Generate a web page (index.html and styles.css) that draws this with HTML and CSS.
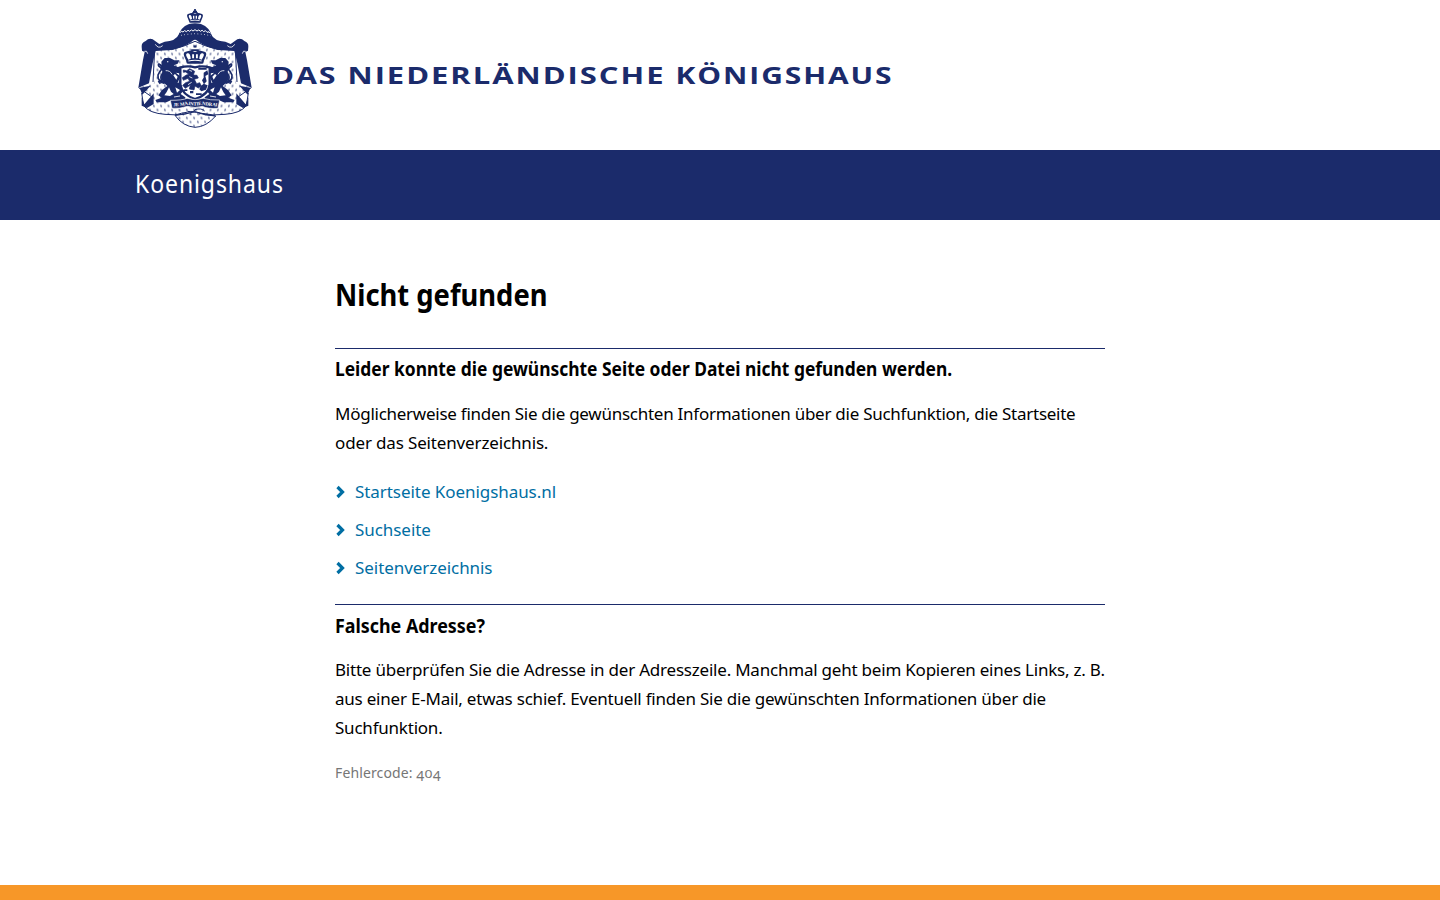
FILE: index.html
```html
<!DOCTYPE html>
<html lang="de">
<head>
<meta charset="utf-8">
<title>Nicht gefunden | Das Niederländische Königshaus</title>
<link rel="stylesheet" href="styles.css">
</head>
<body>
<header class="masthead">
  <svg class="crest" viewBox="0 0 390 405" role="img" aria-label="Wappen">
    <defs>
      <pattern id="ermine" width="22" height="24" patternUnits="userSpaceOnUse">
        <path d="M5 2l1 8M16 14l1 8" stroke="#1b2b6b" stroke-width="2.6"/>
      </pattern>
      <g id="crown">
        <path class="ink" d="M-3-19h6v-4h-6zM-8-15h16v4H-8zM-16 17L-23 0Q-26-9-18-10Q-10-14 0-9Q10-14 18-10Q26-9 23 0L16 17Z"/>
        <path class="paper" d="M-17 3Q-21-5-16-6Q-10-7-9 6L-14 8ZM17 3Q21-5 16-6Q10-7 9 6L14 8ZM-6-4h4v9h-4zM2-4h4v9h-4z"/>
        <path class="paperline" d="M-14 11Q0 8 14 11"/>
      </g>
      <g id="side">
        <path class="ink" d="M35 140Q34 128 47 123Q57 113 68 118L88 132L104 125Q137 124 147 103L195 103V118Q163 143 124 150L77 153L68 190L57 250L25 263L39 180L44 156L36 152Z"/>
        <path class="paperline" d="M76 133Q85 148 98 137M43 154Q51 150 53 161"/>
        <path class="mantle" d="M75 151Q125 151 195 118V345Q130 349 80 339Q43 337 39 315L70 294L26 262L73 250Z"/>
        <path class="line" d="M124 149Q163 140 195 124"/>
        <path class="ink" d="M29 263L62 257L37 284ZM43 313L71 280V312L51 324L35 317V292Z"/>
        <path class="line" d="M74 150L69 246M26 263L70 294M35 279L41 317Q59 340 105 343Q140 348 175 340"/>
        <path class="ink" d="M95 199L94 185L104 174L120 174L133 181L148 181L143 191L131 196L143 201L158 198L158 221L137 218L150 228L158 246L150 256L160 272L152 282L166 292V302H119L109 307H80L76 300L95 293L85 286L96 270L112 258L103 250L93 235L98 213L90 205Z"/>
        <path class="lineheavy" d="M104 250Q82 244 84 225Q87 216 97 205Q80 198 87 192Q97 196 98 207Q103 219 94 226Q88 239 104 248M91 251L85 243"/>
        <path class="paper" d="M117 262L110 276L103 286L120 288L131 282L123 275ZM135 222L143 230L139 239L130 226ZM111 184h4v3h-4zM136 262l14 8-9 8z"/>
        <path class="paperline" d="M107 212Q120 211 126 223M132 291l18-3M150 235l-6 14"/>
      </g>
    </defs>
    <path class="mantle outline" d="M135 346Q160 345 195 335Q230 345 257 348Q229 381 195 382Q158 379 135 346Z"/>
    <use href="#side"/>
    <use href="#side" transform="translate(390 0) scale(-1 1)"/>
    <path class="ink" d="M143 116Q148 82 177 72Q195 67 213 72Q242 82 248 116L220 111L195 119L170 111Z"/>
    <path class="scallop" d="M149 99q5-9 10-3q5-8 10-1q5-8 10-1q5-8 10-1q6-8 12 0q6-7 10 1q6-7 10 1q6-7 10 2q7-5 10 3"/>
    <path class="dots" d="M153 106L170 103L195 101L220 103L243 107"/>
    <use href="#crown" transform="translate(195 51)"/>
    <path class="ink" d="M193 28h4v4h4v4h-12v-4h4z"/>
    <path class="shield" d="M151 203Q172 196 195 202Q218 196 239 203V253Q236 284 195 297Q156 284 151 253Z"/>
    <use href="#crown" transform="translate(195 168) scale(1.42 1.36)"/>
    <path class="ink leo" d="M160 210l10 2 9-6 15 8-4 11 11 1 4 8-12 4 7 13 9-3 5 10-9 6-10-6-3 12-14-3 3-12-15 10-8-9 9-8 12-4-5-9-14 6-3-8 12-8 8-2-10-7-7 1Z"/>
    <path class="paperline" d="M178 211l8 3M178 230l9 4M174 254l11-7"/>
    <path class="ink" d="M205 204h25v5h-25zM221 218l11-7 3 12-9 5 4 16-8 9-6-12 5-8ZM212 259l9-8 12 5-5 13-14 5-6-6ZM161 268h11v5h-11zM180 273h10v7h-10zM198 280h17v5h-17z"/>
    <path class="banner" d="M121 301Q158 301 171 295Q195 303 220 295Q239 301 269 300L264 325Q233 327 217 319Q195 326 173 319Q150 327 126 325Z"/>
    <path id="motto-line" class="nofill" d="M130 319Q158 318 172 314Q195 319 218 314Q234 318 262 319"/>
    <text class="motto"><textPath href="#motto-line">JE MAINTIENDRAI</textPath></text>
    <path class="line" d="M135 345Q177 332 199 337Q226 347 257 348M173 334Q194 338 195 329Q214 323 224 333"/>
  </svg>
  <svg class="wordmark" viewBox="0 0 640 44">
    <text y="33"><tspan x="3.5" textLength="66" lengthAdjust="spacingAndGlyphs">DAS</tspan></text>
    <text y="33"><tspan x="79.5" textLength="318" lengthAdjust="spacingAndGlyphs">NIEDERLÄNDISCHE</tspan></text>
    <text y="33"><tspan x="407.5" textLength="218" lengthAdjust="spacingAndGlyphs">KÖNIGSHAUS</tspan></text>
  </svg>
</header>
<div class="bar"><div class="bar-title">Koenigshaus</div></div>
<main class="content">
  <h1>Nicht gefunden</h1>
  <section>
    <h2>Leider konnte die gewünschte Seite oder Datei nicht gefunden werden.</h2>
    <p>Möglicherweise finden Sie die gewünschten Informationen über die Suchfunktion, die Startseite<br><span class="loose">oder das Seitenverzeichnis.</span></p>
    <ul class="links">
      <li><svg viewBox="0 0 10 14"><path d="M2.5 2l5 5-5 5"/></svg><a>Startseite Koenigshaus.nl</a></li>
      <li><svg viewBox="0 0 10 14"><path d="M2.5 2l5 5-5 5"/></svg><a>Suchseite</a></li>
      <li><svg viewBox="0 0 10 14"><path d="M2.5 2l5 5-5 5"/></svg><a>Seitenverzeichnis</a></li>
    </ul>
  </section>
  <section>
    <h2 class="second">Falsche Adresse?</h2>
    <p class="address">Bitte überprüfen Sie die Adresse in der Adresszeile. Manchmal geht beim Kopieren eines Links, z. B.<br>aus einer E-Mail, etwas schief. Eventuell finden Sie die gewünschten Informationen über die<br>Suchfunktion.</p>
  </section>
  <p class="code">Fehlercode: <span class="d4">4</span><span class="d0">0</span><span class="d4">4</span></p>
</main>
<footer class="footer"></footer>
</body>
</html>
```
FILE: styles.css
```css
* { box-sizing: border-box; }
body {
  margin: 0;
  height: 900px;
  display: flex;
  flex-direction: column;
  overflow: hidden;
  background: #fff;
  color: #000;
  font-family: "Noto Sans", "Open Sans", sans-serif;
  font-size: 17px;
  line-height: 29px;
}
h1, h2, p, ul { margin: 0; padding: 0; white-space: nowrap; }
.masthead { height: 150px; padding-left: 130px; display: flex; }
.crest { width: 130px; height: 135px; }
.wordmark { width: 640px; height: 44px; margin: 51px 0 0 8px; }
.wordmark text {
  font-family: "Open Sans", sans-serif;
  font-weight: 700;
  font-size: 23.5px;
  letter-spacing: 1.5px;
  fill: #1b2b6b;
}
.ink { fill: #1b2b6b; }
.paper { fill: #fff; }
.mantle { fill: url(#ermine); }
.outline { stroke: #1b2b6b; stroke-width: 3; }
.line, .lineheavy, .paperline, .scallop, .dots, .nofill { fill: none; }
.line { stroke: #1b2b6b; stroke-width: 3; }
.lineheavy { stroke: #1b2b6b; stroke-width: 5; }
.leo { stroke: #1b2b6b; stroke-width: 2; }
.paperline { stroke: #fff; stroke-width: 2.5; }
.scallop { stroke: #fff; stroke-width: 3; }
.dots { stroke: #fff; stroke-width: 3; stroke-dasharray: 2 8; }
.shield { fill: #fff; stroke: #1b2b6b; stroke-width: 7; }
.banner { fill: #1b2b6b; stroke: #fff; stroke-width: 2; }
.motto { fill: #fff; font: bold 14.5px "Liberation Serif", serif; }
.bar { height: 70px; background: #1b2b6b; padding-left: 135px; }
.bar-title {
  color: #fff;
  font-size: 25px;
  line-height: 67px;
  letter-spacing: 1px;
  transform: scaleX(.92);
  transform-origin: 0 0;
}
.content { width: 770px; margin-left: 335px; flex: 1; }
h1, h2 { transform-origin: 0 0; }
h1 { font-size: 30px; line-height: 40px; padding-top: 55px; height: 128px; transform: scaleX(.912); }
section { border-top: 1px solid #1b2b6b; height: 256px; }
h2 { font-size: 19px; line-height: 30px; padding-top: 5px; height: 50px; transform: scaleX(.916); }
h2.second { padding-top: 6px; transform: scaleX(.94); }
section p { letter-spacing: -.26px; }
section p .loose { letter-spacing: -.15px; }
section p.address { letter-spacing: -.217px; }
.links { list-style: none; padding-top: 20px; color: #006ea3; letter-spacing: -.06px; }
.links li { display: flex; align-items: center; height: 29px; margin-bottom: 9px; }
.links svg { width: 10px; height: 14px; margin-right: 10px; }
.links path { fill: none; stroke: #006ea3; stroke-width: 3.2; }
.code { color: #767676; font-size: 14px; line-height: 24px; margin-top: -99px; letter-spacing: .12px; }
.d4, .d0 { display: inline-block; }
.d4 { transform: translateY(3px); }
.d0 { transform: scaleY(.75); transform-origin: 50% 72%; }
.footer { height: 15px; background: #f79728; }
```
